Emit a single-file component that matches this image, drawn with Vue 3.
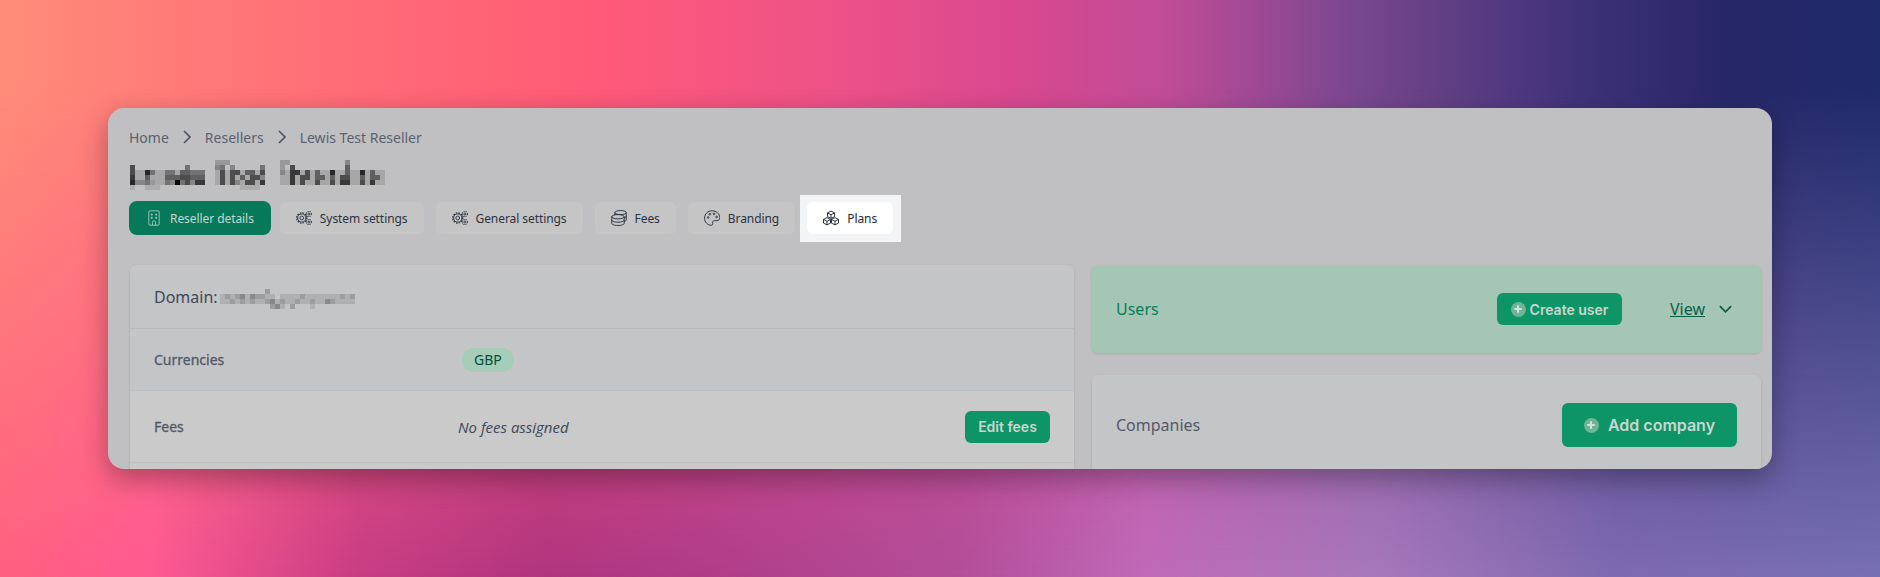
<script setup>
const titleRows = [
  { 17: 2, 18: 2, 19: 2, 30: 2, 31: 2, 43: 3 },
  { 0: 6, 11: 4, 17: 3, 18: 4, 20: 3, 26: 4, 30: 2, 32: 6, 43: 5 },
  { 0: 6, 3: 8, 4: 4, 7: 4, 8: 4, 10: 5, 11: 5, 12: 4, 13: 4, 14: 4, 18: 6, 20: 6, 21: 6, 23: 5, 24: 5, 26: 6, 30: 3, 32: 7, 33: 7, 35: 6, 37: 5, 40: 8, 43: 5, 46: 8, 48: 5 },
  { 0: 7, 3: 5, 7: 5, 8: 5, 9: 5, 10: 6, 11: 6, 12: 5, 13: 5, 14: 5, 18: 6, 20: 6, 22: 5, 24: 6, 25: 6, 26: 3, 32: 7, 34: 6, 35: 6, 37: 5, 38: 5, 40: 5, 42: 6, 43: 6, 46: 5, 48: 5, 49: 5 },
  { 0: 8, 1: 3, 2: 3, 3: 4, 4: 2, 7: 4, 8: 3, 9: 9.5, 10: 4, 11: 6, 12: 3, 13: 7, 14: 7, 18: 6, 20: 6, 21: 3, 23: 6, 24: 6, 26: 7, 32: 7, 34: 6, 37: 6, 40: 6, 42: 7, 43: 7, 46: 6, 48: 7 },
  { 0: 1, 3: 1, 4: 1, 5: 1, 22: 1, 23: 1, 24: 1, 25: 1 }
]
const spans = [[0, 14], [17, 26], [30, 50]]
const titleCells = []
titleRows.forEach((row, y) => {
  spans.forEach(([a, b]) => {
    for (let x = a; x <= b; x++) {
      const v = row[x] ?? (y >= 2 && y <= 4 ? 1.3 : 0)
      if (v) titleCells.push({ x: x * 5, y: y * 5, o: v / 10 })
    }
  })
})
const domainRows = [
  "000000000200000000000000000",
  "121231322110111121111111212",
  "112121211231211211211321111",
  "000000000023102000100000000"
]
const domainCells = []
domainRows.forEach((row, y) => {
  ;[...row].forEach((c, x) => {
    if (c !== '0') domainCells.push({ x: x * 5, y: y * 5, o: Number(c) / 10 })
  })
})
const crumbs = ['Home', 'Resellers', 'Lewis Test Reseller']
</script>

<template>
  <div class="page">
    <main class="window">
      <nav class="crumbs">
        <template v-for="(c, i) in crumbs" :key="c">
          <span>{{ c }}</span>
          <svg v-if="i < 2" class="crumb-sep" viewBox="0 0 10 16"><path d="M2 2l6 6-6 6" /></svg>
        </template>
      </nav>
      <svg class="title" width="260" height="30" shape-rendering="crispEdges" role="img" aria-label="Redacted title">
        <rect v-for="(c, i) in titleCells" :key="i" :x="c.x" :y="c.y" width="5" height="5" fill="#000" :fill-opacity="c.o" />
      </svg>
      <div class="tabs">
        <button class="tab tab-active">
          <svg class="ic" viewBox="0 0 16 20"><rect x="1.500" y="1" width="13" height="18" rx="1.500" /><path d="M4.600 5h1.200v1.400H4.600zM10.200 5h1.200v1.400h-1.200zM4.600 9h1.200v1.400H4.600zM10.200 9h1.200v1.400h-1.200zM6 19v-3.500a2 2 0 0 1 4 0V19" /></svg>
          Reseller details
        </button>
        <button class="tab">
          <svg class="ic" viewBox="0.400 0 17 16"><circle cx="6.500" cy="8" r="2" /><circle cx="6.500" cy="8" r="4.300" /><circle cx="6.500" cy="8" r="5.400" stroke-dasharray="1.600 1.230" stroke-width="1.300" /><circle cx="14" cy="3.800" r="1" /><circle cx="14" cy="3.800" r="2.700" stroke-dasharray="1.200 1" stroke-width="1.100" /><circle cx="14" cy="12.300" r="1" /><circle cx="14" cy="12.300" r="2.700" stroke-dasharray="1.200 1" stroke-width="1.100" /></svg>
          System settings
        </button>
        <button class="tab">
          <svg class="ic" viewBox="0.400 0 17 16"><circle cx="6.500" cy="8" r="2" /><circle cx="6.500" cy="8" r="4.300" /><circle cx="6.500" cy="8" r="5.400" stroke-dasharray="1.600 1.230" stroke-width="1.300" /><circle cx="14" cy="3.800" r="1" /><circle cx="14" cy="3.800" r="2.700" stroke-dasharray="1.200 1" stroke-width="1.100" /><circle cx="14" cy="12.300" r="1" /><circle cx="14" cy="12.300" r="2.700" stroke-dasharray="1.200 1" stroke-width="1.100" /></svg>
          General settings
        </button>
        <button class="tab">
          <svg class="ic" viewBox="0.400 0.500 15.200 15.500"><ellipse cx="9.500" cy="3" rx="5.500" ry="2" /><path d="M4 3v2.500M15 3v7c0 .8-.8 1.400-2 1.700M15 6.500c0 .8-.8 1.400-2 1.700" /><ellipse cx="7" cy="7" rx="6" ry="2.100" /><path d="M1 7v6.500c0 1.100 2.700 2 6 2s6-.9 6-2V7M1 10.300c0 1.100 2.700 2 6 2s6-.9 6-2" /></svg>
          Fees
        </button>
        <button class="tab">
          <svg class="ic" viewBox="0.300 0.500 15.500 15"><path d="M8 1C4 1 .8 4.200.8 8.200c0 3.700 2.900 6.800 6.500 6.800 1.300 0 1.700-1 1.400-2-.4-1.300.3-2.400 1.700-2.400h2.300c1.800 0 2.900-1.200 2.900-3C15.400 3.800 12.200 1 8 1z" /><circle cx="4.300" cy="7.500" r=".8" /><circle cx="6" cy="4.300" r=".8" /><circle cx="10" cy="4" r=".8" /><circle cx="12.500" cy="7" r=".8" /></svg>
          Branding
        </button>
        <button class="tab tab-focus">
          <svg class="ic" viewBox="1 0.500 16 14.800"><path d="M9 1l3.500 1.800v3.700L9 8.300 5.500 6.500V2.800zM5.500 2.800L9 4.700l3.500-1.900M9 4.700v3.600" /><path d="M5 7.500l3.500 1.800V13L5 14.800 1.500 13V9.300zM1.500 9.300L5 11.200l3.500-1.900M5 11.200v3.600" /><path d="M13 7.500l3.500 1.800V13L13 14.800 9.500 13V9.300zM9.500 9.300l3.500 1.900 3.500-1.900M13 11.200v3.600" /></svg>
          Plans
        </button>
      </div>
      <section class="columns">
        <div class="card detail">
          <header class="detail-head">
            <span>Domain:</span>
            <svg class="domain" width="135" height="20" shape-rendering="crispEdges" role="img" aria-label="Redacted domain">
              <rect v-for="(c, i) in domainCells" :key="i" :x="c.x" :y="c.y" width="5" height="5" fill="#000" :fill-opacity="c.o" />
            </svg>
          </header>
          <div class="row row-cur">
            <span class="row-label">Currencies</span>
            <span><span class="pill">GBP</span></span>
            <span></span>
          </div>
          <div class="row row-fees">
            <span class="row-label">Fees</span>
            <em class="none">No fees assigned</em>
            <button class="btn">Edit fees</button>
          </div>
          <div class="row-next"></div>
        </div>
        <div class="side">
          <div class="card users">
            <span class="users-title">Users</span>
            <button class="btn btn-create">
              <span class="plus"></span>Create user
            </button>
            <a class="view">View</a>
            <svg class="chev" viewBox="0 0 16 10"><path d="M2 2l6 6 6-6" /></svg>
          </div>
          <div class="card companies">
            <span class="comp-title">Companies</span>
            <button class="btn btn-add">
              <span class="plus"></span>Add company
            </button>
          </div>
        </div>
      </section>
    </main>
  </div>
</template>

<style>
html, body { margin: 0; padding: 0; }
</style>

<style scoped>
* { box-sizing: border-box; }
.page {
  position: relative;
  width: 1880px;
  height: 577px;
  padding: 108px;
  overflow: hidden;
  font-family: "Noto Sans", "Open Sans", sans-serif;
  background: linear-gradient(90deg, #ff6080 0%, #ff5a92 8%, #c93d85 19%, #b0357f 29%, #b03d8a 38%, #b34e9a 51%, #c06ab8 61%, #a878bc 73%, #7e6ab0 86%, #7870b5 100%);
}
.page::before {
  content: "";
  position: absolute;
  inset: 0;
  background: linear-gradient(90deg, #ff8c78 0%, #ff7578 13%, #ff6275 26%, #ff5a78 32%, #ec5188 45%, #d9488f 54%, #c04c97 62%, #7a4690 72%, #6a4288 75%, #3e3178 84%, #262668 92%, #1e2a6a 100%);
  -webkit-mask-image: linear-gradient(180deg, #000 0%, #000 15%, transparent 100%);
  mask-image: linear-gradient(180deg, #000 0%, #000 15%, transparent 100%);
}
.window {
  position: relative;
  height: 361px;
  background: #c0c0c2;
  border-radius: 16px;
  box-shadow: 0 10px 28px rgba(0, 0, 0, .32);
  padding: 19px 11px 0 21px;
  overflow: hidden;
}
.crumbs {
  display: flex;
  align-items: center;
  height: 20px;
  font-size: 14px;
  color: #5b6170;
}
.crumb-sep {
  width: 10px;
  height: 16px;
  margin: 0 13px;
  fill: none;
  stroke: #4f5564;
  stroke-width: 1.700;
}
.title {
  display: block;
  margin: 13px 0 0 1px;
}
.tabs {
  display: flex;
  align-items: center;
  gap: 12px;
  margin-top: 11px;
  height: 34px;
}
.tab {
  display: flex;
  align-items: center;
  gap: 8px;
  height: 32px;
  padding: 0 16px;
  border: 0;
  border-radius: 6px;
  background: #c5c5c6;
  color: #2d3340;
  font-family: inherit;
  font-size: 12px;
  letter-spacing: -.07px;
  white-space: nowrap;
}
.tab-active {
  height: 34px;
  margin-right: -3px;
  padding: 0 17px 0 17px;
  border-radius: 8px;
  background: #05795a;
  color: #c6d6cf;
}
.tab-focus {
  position: relative;
  background: #fff;
  color: #1f2937;
  z-index: 0;
}
.tab-focus::before {
  content: "";
  position: absolute;
  inset: -7px -8px -8px -7px;
  background: #f3f4f6;
  z-index: -2;
}
.tab-focus::after {
  content: "";
  position: absolute;
  inset: 0;
  background: #fff;
  border-radius: 6px;
  z-index: -1;
}
.ic {
  width: 16px;
  height: 16px;
  flex: none;
  fill: none;
  stroke: currentColor;
  stroke-width: .95;
}
.columns {
  display: grid;
  grid-template-columns: 944px 669px;
  gap: 18px;
  margin: 30px 0 0 1px;
  align-items: start;
}
.card {
  background: #c4c5c6;
  border-radius: 6px;
  box-shadow: 0 1px 3px rgba(0, 0, 0, .12);
}
.detail-head {
  display: flex;
  align-items: center;
  height: 64px;
  padding: 0 24px;
  gap: 2px;
  border-bottom: 1px solid #b8b9ba;
  font-size: 16px;
  color: #414858;
}
.domain { margin-top: 5px; }
.row {
  display: grid;
  grid-template-columns: 308px 1fr auto;
  align-items: center;
  padding: 0 24px;
  font-size: 14px;
  color: #414858;
}
.row-cur {
  height: 62px;
  border-bottom: 1px solid #bdbebf;
}
.row-fees {
  height: 72px;
  background: #c9cac9;
  border-bottom: 1px solid #bfc0c1;
}
.row-next {
  height: 40px;
  background: #c9cac9;
}
.row-label {
  font-family: "Noto Sans", "Open Sans", sans-serif;
  -webkit-text-stroke: .3px #525968;
  color: #525968;
}
.pill {
  display: inline-block;
  padding: 0 12px;
  height: 24px;
  line-height: 24px;
  border-radius: 12px;
  background: #a5cdb9;
  color: #064e3b;
}
.none {
  font-family: "Open Sans", "Noto Sans", sans-serif;
  font-size: 15px;
  color: #414858;
  margin-left: -4px;
}
.btn {
  display: inline-flex;
  align-items: center;
  justify-content: center;
  border: 0;
  background: #0d9467;
  color: #c9d6cf;
  font-family: Inter, "Noto Sans", sans-serif;
  font-weight: 600;
  font-size: 14px;
  height: 32px;
  width: 85px;
  border-radius: 6px;
}
.side {
  display: flex;
  flex-direction: column;
  gap: 22px;
}
.users {
  display: flex;
  align-items: center;
  height: 88px;
  padding: 0 28px 0 24px;
  background: #a5c6b5;
}
.users-title {
  flex: 1;
  font-size: 16px;
  color: #0a7d5a;
}
.btn-create {
  width: 125px;
  gap: 4px;
}
.plus {
  position: relative;
  width: 15px;
  height: 15px;
  border-radius: 50%;
  background: #6fb499;
  flex: none;
}
.plus::before, .plus::after {
  content: "";
  position: absolute;
  background: #d5e2da;
  border-radius: 1px;
}
.plus::before { left: 3.500px; right: 3.500px; top: 6.500px; height: 2px; }
.plus::after { top: 3.500px; bottom: 3.500px; left: 6.500px; width: 2px; }
.view {
  margin-left: 48px;
  font-size: 16px;
  color: #0c5f47;
  text-decoration: underline;
}
.chev {
  width: 15px;
  height: 10px;
  margin-left: 13px;
  fill: none;
  stroke: #0c5f47;
  stroke-width: 1.900;
}
.companies {
  display: flex;
  align-items: center;
  justify-content: space-between;
  height: 112px;
  padding: 0 24px;
}
.comp-title {
  font-size: 16px;
  color: #535a69;
  margin-top: -12px;
}
.btn-add {
  width: 175px;
  height: 44px;
  font-size: 16px;
  gap: 9px;
  margin-top: -12px;
}
</style>
